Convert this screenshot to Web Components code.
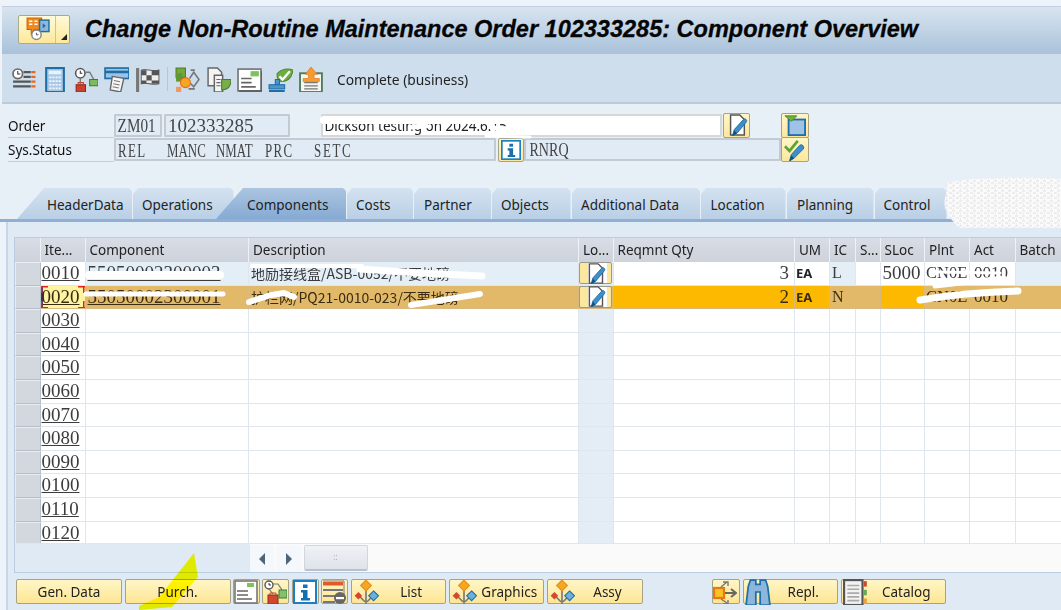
<!DOCTYPE html>
<html>
<head>
<meta charset="utf-8">
<style>
  html, body { margin: 0; height: 100%; overflow: hidden; background: #eef3f9; }
  body { font-family: "Noto Sans", "Liberation Sans", sans-serif; }
</style>
</head>
<body>
<sap-app>
  <sap-titlebar>Change Non-Routine Maintenance Order 102333285: Component Overview</sap-titlebar>
  <sap-toolbar>Complete (business)</sap-toolbar>
  <sap-header></sap-header>
  <sap-tabs></sap-tabs>
  <sap-panel>
    <sap-table></sap-table>
    <sap-actions></sap-actions>
  </sap-panel>
</sap-app>

<script>
const ICONS = {
  menu: '<path d="M2 1h14v11H9l-3 4v-4H2z" fill="#f08a1d" stroke="#c9600f"/><path d="M4 4h3M9 4h3M4 7h3M9 7h3" stroke="#fff" stroke-width="1.5"/><rect x="14" y="3" width="9" height="11" fill="#8fb7dc" stroke="#1c6fa8" stroke-width="1.4"/><path d="M17 6l3 2.5-3 2.5z" fill="#1c6fa8"/><circle cx="11" cy="17" r="4.5" fill="#fff" stroke="#888" stroke-width="1.4"/><path d="M11 15v2h2" stroke="#666" fill="none"/>',
  clocklist: '<circle cx="6.5" cy="6.5" r="4.6" fill="#fff" stroke="#666" stroke-width="1.6"/><path d="M6.5 3.8v2.9h2.4" stroke="#333" fill="none"/><path d="M12 5h7M12 9.5h7M2 14h17M2 18.5h17" stroke="#565656" stroke-width="2.2"/><path d="M19.5 5h4M19.5 9.5h4M19.5 14h4M19.5 18.5h4" stroke="#e8691b" stroke-width="2.2"/>',
  calc: '<rect x="4" y="1" width="17" height="23" fill="#a9c9e6" stroke="#1d6ea6" stroke-width="2"/><rect x="6.5" y="3.5" width="12" height="3.5" fill="#e8f2fa"/><path d="M7 10h11M7 13.5h11M7 17h11M7 20.5h11" stroke="#f1f7fc" stroke-width="1.6" stroke-dasharray="2 1"/>',
  netlock: '<circle cx="7" cy="6" r="4.5" fill="#fff" stroke="#555" stroke-width="1.5"/><path d="M7 3.5V6h2" stroke="#333" fill="none"/><path d="M7 11v5M12 5h4l4 7" stroke="#777" stroke-width="1.3" fill="none"/><rect x="3" y="17" width="9" height="7" fill="#c9402c" stroke="#8e2a1b"/><path d="M5 17v-2h5v2" stroke="#c9402c" fill="none"/><rect x="16" y="12" width="8" height="6" fill="#7dbb5f" stroke="#37803a"/>',
  card: '<rect x="1" y="1" width="23" height="10" fill="#9cc3e5" stroke="#1d6ea6" stroke-width="1.6"/><rect x="1" y="3.5" width="23" height="2.5" fill="#1d6ea6"/><path d="M8 9l11 2-3 13-10-2z" fill="#f6f6f6" stroke="#666" stroke-width="1.3"/><path d="M9.5 13l6 1.2M9 16l6 1.2M8.3 19l6 1.2" stroke="#777"/>',
  flag: '<rect x="1" y="1" width="3" height="23" fill="#777"/><path d="M6 3c5-2 10 2 17 0v13c-7 2-12-2-17 0z" fill="#eee" stroke="#666"/><path d="M6 3h5v5H6zM16 3h7v5h-7zM11 8h5v5h-5zM6 13h5v3H6zM16 13h7v3h-7z" fill="#555"/>',
  network: '<rect x="1" y="1" width="9" height="9" fill="#74a83a" stroke="#4c7d24"/><rect x="1" y="6" width="6" height="8" fill="#5f9830"/><circle cx="10" cy="15" r="4.8" fill="#f6a623" stroke="#e36d18"/><rect x="1" y="19" width="5" height="5" fill="#f19a60"/><path d="M15 3l4 0M14 11l4-6 5 7-5 7-3-3M19 21h-6" stroke="#777" stroke-width="1.5" fill="none"/>',
  docleaf: '<path d="M2 1h9l4 4v13H2z" fill="#f4f4f4" stroke="#666" stroke-width="1.4"/><path d="M8 8h8v16H8z" fill="#f4f4f4" stroke="#666" stroke-width="1.4"/><path d="M10 12h4M10 15h4M10 18h4" stroke="#666"/><path d="M15 12h9c0 6-3 10-9 10z" fill="#77ad4a" stroke="#4c7d24"/>',
  docgreen: '<rect x="1" y="2" width="22" height="21" fill="#fff" stroke="#777" stroke-width="1.6"/><path d="M2 23h22V4" fill="none" stroke="#555" stroke-width="1.4"/><rect x="13" y="4" width="8" height="5" fill="#7cc35a"/><path d="M4 11h10M4 15h10M4 19h14" stroke="#666" stroke-width="1.6"/>',
  stamp: '<path d="M9 6c4-4 10-5 15-3-1 7-5 11-11 11-3 0-5-4-4-8z" fill="#6cae3f" stroke="#4a8a2a"/><path d="M11 9l3 3 7-8" stroke="#fff" stroke-width="2.2" fill="none"/><path d="M7 12h4v5H7z" fill="#4f93c9" stroke="#1d6ea6"/><rect x="1" y="17" width="15" height="4" fill="#4f93c9" stroke="#1d6ea6"/><rect x="1" y="22" width="15" height="2" fill="#1d6ea6"/>',
  clipup: '<rect x="1" y="6" width="21" height="18" fill="#f5f6f2" stroke="#4c7d5a" stroke-width="1.8"/><path d="M5 15h13M5 18h13M5 21h13" stroke="#777" stroke-width="1.2"/><path d="M11.5 0l6 7h-3v4h5v3H4v-3h5V7H6z" fill="#f39c2f" stroke="#e06d15" stroke-width=".6"/>',
  info: '<rect x="1" y="1" width="22" height="22" fill="#fff" stroke="#1c7fc0" stroke-width="2"/><rect x="10" y="4.5" width="4.5" height="3.5" fill="#166fae"/><path d="M8 10h6.5v8H17v2.5H8V18h2v-5.5H8z" fill="#166fae"/>',
  pendoc: '<path d="M5 1h10l5 5v17H5z" fill="#fff" stroke="#555" stroke-width="1.6"/><path d="M7 24l2-7L19 6c2-2 5 1 3 3L12 21z" fill="#3f8ec7" stroke="#1d6ea6"/><path d="M7 24l2-6 3 3z" fill="#0f4f7d"/>',
  filterbox: '<rect x="5" y="6" width="18" height="17" fill="#9fc2e6" stroke="#1c6fa8" stroke-width="2"/><path d="M1 2h13l-6 6z" fill="#69b23b" stroke="#4d8a26"/>',
  checkpen: '<path d="M1 8l5 5 9-11" stroke="#5aa635" stroke-width="3" fill="none"/><path d="M6 24l2-7 9-10c2-2 6 1 4 4l-10 10z" fill="#3f8ec7" stroke="#1d6ea6"/><path d="M6 24l2-6 3 3z" fill="#0f4f7d"/>',
  sum: '<rect x="1" y="1" width="22" height="22" fill="#fff" stroke="#777" stroke-width="1.6"/><rect x="13" y="3" width="7" height="4" fill="#7cc35a"/><path d="M3 11h11M3 15h11M3 19h15" stroke="#666" stroke-width="1.6"/>',
  lockred: '<circle cx="6" cy="5" r="4" fill="#fff" stroke="#555" stroke-width="1.4"/><path d="M6 3v2h2" stroke="#333" fill="none"/><path d="M6 9l4 5M10 4h5l4 6" stroke="#777" stroke-width="1.2" fill="none"/><rect x="5" y="15" width="10" height="9" fill="#d2482e" stroke="#8e2a1b"/><path d="M7 15v-2h6v2" stroke="#c9402c" fill="none"/><rect x="16" y="10" width="8" height="8" fill="#86c06a" stroke="#37803a"/>',
  minuslist: '<rect x="1" y="2" width="20" height="3.5" fill="#e05b28"/><path d="M1 1h21v20" fill="none" stroke="#777"/><rect x="1" y="9" width="20" height="2" fill="#777"/><rect x="1" y="15" width="12" height="2" fill="#777"/><rect x="1" y="21" width="12" height="2" fill="#777"/><circle cx="18" cy="18" r="6" fill="#666"/><rect x="14" y="17" width="8" height="2.2" fill="#fff"/>',
  tree: '<path d="M12 9v14M5 15l6 6M19 15l-6 6" stroke="#777" stroke-width="1.5" fill="none"/><path d="M12 1l5 5-5 5-5-5z" fill="#f5a623" stroke="#e8901a"/><path d="M5 12l3.5 3.5L5 19l-3.5-3.5z" fill="#d2482e"/><path d="M19 11l4.5 4.5L19 20l-4.5-4.5z" fill="#6eb0dc" stroke="#1c6fa8"/>',
  transfer: '<rect x="1" y="8" width="10" height="10" fill="#f7c51e" stroke="#e8761b" stroke-width="2.2"/><path d="M12 13h10M18 9l5 4-5 4" stroke="#666" stroke-width="2" fill="none"/><path d="M8 7l6-5M10 2h5v4M8 19l6 4M10 24h5v-4" stroke="#777" stroke-width="1.4" fill="none"/>',
  binoc: '<path d="M3 7l2-6h5v4h4V1h5l2 6 2 17h-9V12h-4v12H1z" fill="#8db6dc" stroke="#1c6fa8" stroke-width="1.6"/>',
  catalog: '<rect x="1" y="1" width="17" height="23" fill="#f2f2f2" stroke="#555" stroke-width="2"/><path d="M4 6h11M4 9.5h11M4 13h11M4 16.5h11M4 20h11" stroke="#aaa" stroke-width="1.5"/><rect x="19" y="2" width="3" height="5" fill="#d2482e"/><rect x="19" y="10" width="3" height="5" fill="#6aa84f"/><rect x="19" y="18" width="3" height="5" fill="#f0a030"/>'
};

const icon = (name, size = 24) =>
  `<svg width="${size}" height="${size}" viewBox="0 0 24 24" style="display:block;flex:none">${ICONS[name]}</svg>`;

class SapApp extends HTMLElement {
  constructor() {
    super();
    this.attachShadow({mode: 'open'}).innerHTML = `
      <style>
        :host { display: block; position: relative; width: 1061px; height: 610px; overflow: hidden; }
        .page { display: flex; flex-direction: column; height: 100%; filter: blur(.35px); }
        svg { position: absolute; left: 0; top: 0; pointer-events: none; }
        .paint { stroke: #fff; fill: none; stroke-linecap: round; stroke-linejoin: round; }
        .marker { mix-blend-mode: multiply; }
        .over { filter: blur(.5px); }
      </style>
      <div class="page"><slot></slot></div>
      <svg class="marker" width="1061" height="610" viewBox="0 0 1061 610">
        <path d="M194 553l4 24-26 30-33 3v-4l20-9 24-30z" fill="#ffff00"/>
      </svg>
      <svg class="over" width="1061" height="610" viewBox="0 0 1061 610">
        <defs>
          <pattern id="noise" width="7" height="5" patternUnits="userSpaceOnUse">
            <rect width="7" height="5" fill="#fafafa"/>
            <path d="M0 1h3M4 3h3M1 4h1" stroke="#d2d2d2" stroke-width=".7"/>
          </pattern>
        </defs>
        <path d="M948 182c30-5 85-5 113-3v49H960c-10-8-18-20-15-30z" fill="url(#noise)"/>
        <path class="paint" stroke-width="8" d="M324 120H520"/>
        <path class="paint" stroke-width="5" d="M412 127l14-1M492 128l20 1"/>
        <path class="paint" stroke-width="3" d="M486 136l44 1"/>
        <path class="paint" stroke-width="8" d="M89 275h131"/>
        <path class="paint" stroke-width="4" d="M252 266h110"/>
        <path class="paint" stroke-width="7" d="M360 269l60 4 62 3"/>
        <path class="paint" stroke-width="5" d="M86 294h137"/>
        <path class="paint" stroke-width="6" d="M249 302l22-7 13-2 10 4"/>
        <path class="paint" stroke-width="6" d="M411 305l69-11"/>
        <path class="paint" stroke-width="3" d="M938 272l62 1"/>
        <path class="paint" stroke-width="5" d="M935 286l69-8"/>
        <path class="paint" stroke-width="7" d="M920 300c30-5 65-8 98-9"/>
      </svg>`;
  }
}

class SapTitlebar extends HTMLElement {
  constructor() {
    super();
    this.attachShadow({mode: 'open'}).innerHTML = `
      <style>
        :host { display: flex; align-items: center; height: 48px; margin: 6px 0 0 2px; box-sizing: border-box;
          padding: 0 0 3px 16px; background: linear-gradient(#d8e4f0, #a9c2da); border-top: 1px solid #c2cede; }
        .menu { display: flex; width: 52px; height: 29px; box-sizing: border-box; border: 1px solid #aaa98c; border-radius: 2px;
          background: linear-gradient(#fffbd8, #fde89a); }
        .menu i { display: flex; flex: 1; align-items: center; justify-content: center; }
        .menu b { position: relative; width: 13px; border-left: 1px solid #d3c685; }
        .menu b::after { content: ""; position: absolute; right: 2px; bottom: 3px; border: 3px solid transparent;
          border-right-color: #222; border-bottom-color: #222; }
        h1 { margin: 0 0 0 15px; font: italic bold 23.5px "Liberation Sans", sans-serif; -webkit-text-stroke: .3px #050505;
          color: #050505; white-space: nowrap; }
      </style>
      <div class="menu"><i>${icon('menu', 25)}</i><b></b></div>
      <h1><slot></slot></h1>`;
  }
}

class SapToolbar extends HTMLElement {
  constructor() {
    super();
    const names = ['clocklist', 'calc', 'netlock', 'card', 'flag', '|', 'network', 'docleaf', 'docgreen', 'stamp', 'clipup'];
    this.attachShadow({mode: 'open'}).innerHTML = `
      <style>
        :host { display: flex; align-items: center; gap: 6px; height: 50px; margin-left: 2px; box-sizing: border-box; padding: 2px 0 0 9px;
          background: #cfdeed; border-bottom: 2px solid #bccbdb; }
        i { width: 1px; height: 24px; background: #b5c8da; margin: 0 1px; }
        span { margin-left: 7px; font-size: 13.8px; color: #222; }
      </style>
      ${names.map(n => n === '|' ? '<i></i>' : icon(n, 25)).join('')}
      <span><slot></slot></span>`;
  }
}

class SapField extends HTMLElement {
  constructor() {
    super();
    this.attachShadow({mode: 'open'}).innerHTML = `
      <style>
        :host { display: block; box-sizing: border-box; height: 23px; overflow: hidden; background: #e0ebf5; flex: none;
          border: 2px solid #c3cad1; border-radius: 1px; color: #444; font: 19px/19px "Liberation Serif", serif; white-space: nowrap; }
        :host([white]) { background: #fff; border-color: #d7d7d7; font: 13.5px/21px "Noto Sans", sans-serif; color: #222; }
        span { display: inline-block; transform-origin: 0 50%; padding-left: 2px; }
      </style>
      <span><slot></slot></span>`;
  }
  connectedCallback() {
    this.style.width = this.getAttribute('w') + 'px';
    if (this.hasAttribute('sx')) this.shadowRoot.querySelector('span').style.transform = `scaleX(${this.getAttribute('sx')})`;
  }
}

class SapIconBtn extends HTMLElement {
  constructor() {
    super();
    this.attachShadow({mode: 'open'}).innerHTML = `
      <style>
        :host { display: flex; align-items: center; justify-content: center; box-sizing: border-box; flex: none;
          border: 1px solid #a8a284; border-radius: 2px; background: linear-gradient(#fff6c8, #fde79c); }
      </style>`;
  }
  connectedCallback() {
    this.style.width = (this.getAttribute('w') || 29) + 'px';
    this.style.height = (this.getAttribute('h') || 25) + 'px';
    this.shadowRoot.innerHTML += icon(this.getAttribute('name'), +this.getAttribute('s') || 22);
  }
}

class SapHeader extends HTMLElement {
  constructor() {
    super();
    this.attachShadow({mode: 'open'}).innerHTML = `
      <style>
        :host { display: block; height: 84px; padding-top: 9px; box-sizing: border-box; background: #e8f0f7; }
        .row { display: flex; align-items: center; height: 24.5px; }
        .label { width: 106px; margin-left: 8px; font-size: 13.5px; color: #111; line-height: 23px; flex: none;
          box-shadow: 0 1px 0 #c6ced8; padding-top: 1px; box-sizing: border-box; height: 23px; }
        .stat { display: flex; padding-top: 1px; }
        .gap1 { width: 30.5px; flex: none; }
      </style>
      <div class="row">
        <div class="label">Order</div>
        <sap-field w="48" sx=".8">ZM01</sap-field>
        <sap-field w="126" style="margin-left:2px">102333285</sap-field>
        <div class="gap1"></div>
        <sap-field w="401" white>Dickson testing on 2024.6.15</sap-field>
        <sap-icon-btn name="pendoc" w="27" h="25" style="margin-left:1.5px"></sap-icon-btn>
        <div class="gap1"></div>
        <sap-icon-btn name="filterbox" w="28.5" h="25"></sap-icon-btn>
      </div>
      <div class="row">
        <div class="label">Sys.Status</div>
        <sap-field w="381.5"><div class="stat"><sap-st style="letter-spacing:2px">REL</sap-st><sap-st>MANC</sap-st><sap-st>NMAT</sap-st><sap-st style="letter-spacing:2px">PRC</sap-st><sap-st style="letter-spacing:2.5px">SETC</sap-st></div></sap-field>
        <sap-icon-btn name="info" w="26" h="24" s="20" style="margin-left:2.5px"></sap-icon-btn>
        <sap-field w="256.5" sx=".74" style="padding-left:2px">RNRQ</sap-field>
        <sap-icon-btn name="checkpen" w="28.5" h="25"></sap-icon-btn>
      </div>`;
  }
}

class SapSt extends HTMLElement {
  constructor() {
    super();
    this.attachShadow({mode: 'open'}).innerHTML = `
      <style>
        :host { display: block; width: 49px; flex: none; }
        span { display: inline-block; transform: scaleX(.68); transform-origin: 0 50%; }
      </style><span><slot></slot></span>`;
  }
}

class SapTab extends HTMLElement {
  constructor() {
    super();
    this.attachShadow({mode: 'open'}).innerHTML = `
      <style>
        :host { display: flex; align-items: center; box-sizing: border-box; height: 31px; flex: none; padding-top: 3px;
          font-size: 13.5px; color: #222; white-space: nowrap;
          background: linear-gradient(#d4e2f0, #b9cfe6);
          clip-path: polygon(0 100%, 0 6px, 5px 0, calc(100% - 3px) 0, 100% 3px, 100% 100%); }
        :host([big]) { clip-path: polygon(0 100%, 27px 0, calc(100% - 3px) 0, 100% 3px, 100% 100%); }
        :host([active]) { background: linear-gradient(#abc5e1, #86aad3); }
      </style><slot></slot>`;
  }
  connectedCallback() {
    this.style.width = this.getAttribute('w') + 'px';
    this.style.paddingLeft = this.getAttribute('pl') + 'px';
  }
}

class SapTabs extends HTMLElement {
  constructor() {
    super();
    this.attachShadow({mode: 'open'}).innerHTML = `
      <style>
        :host { display: flex; gap: 1px; height: 34px; box-sizing: border-box; padding-left: 17px; border-bottom: 3px solid #8fb0d4; background: #e8f0f7; }
      </style>
      <sap-tab big w="115" pl="30">HeaderData</sap-tab>
      <sap-tab w="100.5" pl="9">Operations</sap-tab>
      <sap-tab big active w="130" pl="31" style="margin-left:-18.5px">Components</sap-tab>
      <sap-tab w="66" pl="9">Costs</sap-tab>
      <sap-tab w="77" pl="10">Partner</sap-tab>
      <sap-tab w="78.5" pl="9">Objects</sap-tab>
      <sap-tab w="128.5" pl="9.5">Additional Data</sap-tab>
      <sap-tab w="84.5" pl="9.5">Location</sap-tab>
      <sap-tab w="87" pl="10.5">Planning</sap-tab>
      <sap-tab w="72" pl="9">Control</sap-tab>`;
  }
}

class SapPanel extends HTMLElement {
  constructor() {
    super();
    this.attachShadow({mode: 'open'}).innerHTML = `
      <style>
        :host { display: flex; flex-direction: column; flex: 1; box-sizing: border-box; margin-left: 6px; padding: 15px 0 0 6px;
          background: #dfeaf4; border-left: 2px solid #c5d6e8; min-height: 0; }
      </style><slot></slot>`;
  }
}

const COLS = '25.5px 45px 163.5px 330px 34.5px 181.5px 35px 26px 24.5px 44.5px 45px 45.5px 60px';

class SapTable extends HTMLElement {
  constructor() {
    super();
    const heads = ['', 'Ite...', 'Component', 'Description', 'Lo...', 'Reqmnt Qty', 'UM', 'IC', 'S...', 'SLoc', 'Plnt', 'Act', 'Batch'];
    const rows = [
      {n: '0010', cls: 'r1', comp: '55050002300003', desc: '地励接线盒/ASB-0052/不要地磅', qty: '3', ic: 'L', sloc: '5000', plnt: 'CN0E', act: '0010'},
      {n: '0020', cls: 'r2', comp: '55050002300001', desc: '护栏网/PQ21-0010-023/不要地磅', qty: '2', ic: 'N', sloc: '', plnt: 'CN0E', act: '0010'}
    ];
    for (let i = 3; i <= 12; i++) rows.push({n: String(i * 10).padStart(4, '0'), cls: ''});
    const rowHtml = r => `
      <div class="row ${r.cls}">
        <div class="sel"></div>
        <div class="c item"><u>${r.n}</u></div>
        <div class="c comp">${r.comp ? `<u>${r.comp}</u>` : ''}</div>
        <div class="c desc">${r.desc || ''}</div>
        <div class="c lo">${r.qty ? `<span class="pen">${icon('pendoc', 21)}</span>` : ''}</div>
        <div class="c qty">${r.qty || ''}</div>
        <div class="c um">${r.qty ? 'EA' : ''}</div>
        <div class="c ic">${r.ic || ''}</div>
        <div class="c s"></div>
        <div class="c sloc">${r.sloc || ''}</div>
        <div class="c plnt">${r.plnt || ''}</div>
        <div class="c act">${r.act || ''}</div>
        <div class="c batch"></div>
      </div>`;
    this.attachShadow({mode: 'open'}).innerHTML = `
      <style>
        :host { display: block; height: 336px; box-sizing: border-box; border: 1px solid #b9cde0; border-width: 1px 0 1px 1px; overflow: hidden; }
        .head, .row { display: grid; grid-template-columns: ${COLS}; }
        .head { height: 24px; }
        .head div { background: linear-gradient(#d9dde5, #cdd2db); border-right: 1px solid #eef1f5; padding-left: 4px;
          font-size: 13.5px; line-height: 24px; color: #222; overflow: hidden; white-space: nowrap; box-sizing: border-box; }
        .rows { height: 281.5px; overflow: hidden; border-bottom: 1px solid #dfe6ee; box-sizing: border-box; }
        .row { height: 23.6px; }
        .c { box-sizing: border-box; background: #fff; border-right: 1px solid #dfe6ee; border-bottom: 1px solid #dfe6ee;
          font: 19px/21px "Liberation Serif", serif; color: #3c3c3c; overflow: hidden; white-space: nowrap; }
        .sel { background: #d3d7de; border: 1px solid #e9ecf0; border-right-color: #b9bfc8; border-bottom-color: #b9bfc8; box-sizing: border-box; }
        .item { padding-left: 1px; }
        .lo { background: #e4edf5; }
        .comp { padding-left: 2px; }
        .desc { padding-left: 2px; font: 14px/22px "Noto Sans CJK SC", "Noto Sans", sans-serif; }
        .qty { text-align: right; padding-right: 5px; }
        .um { font: bold 13px/23px "Noto Sans", sans-serif; padding-left: 1px; color: #222; }
        .ic { font-size: 16px; padding-left: 2px; }
        .sloc { padding-left: 2px; }
        .plnt { padding-left: 1px; font-size: 16.5px; }
        .act { padding-left: 4px; font-size: 17px; }
        .pen { display: flex; align-items: center; justify-content: center; box-sizing: border-box; height: 22px; width: 33px;
          background: linear-gradient(90deg, #fbe79d 0 8px, #fff 8px 27px, #fbe79d 27px); border: 1px solid #9a9a8e; border-radius: 2px; }
        .r1 .comp, .r1 .desc, .r1 .ic, .r1 .batch { background: #e3eef7; }
        .r1 .item { background: #fff; }
        .r2 .c { background: #e2b969; color: #3a2c10; border-color: #d8ba80; }
        .r2 .qty, .r2 .um, .r2 .sloc { background: #fdb900; }
        .r2 .item { background: #fdf3a0; box-shadow: inset 2px 0 0 #2a3a8a; position: relative; }
        .r2 .item::before { content: ""; position: absolute; inset: 0; pointer-events: none;
          background:
            linear-gradient(#e32322, #e32322) 0 0/7px 1.5px no-repeat, linear-gradient(#e32322, #e32322) 0 0/1.5px 7px no-repeat,
            linear-gradient(#e32322, #e32322) 100% 0/7px 1.5px no-repeat, linear-gradient(#e32322, #e32322) 100% 0/1.5px 7px no-repeat,
            linear-gradient(#e32322, #e32322) 0 100%/7px 1.5px no-repeat, linear-gradient(#e32322, #e32322) 0 100%/1.5px 7px no-repeat,
            linear-gradient(#e32322, #e32322) 100% 100%/7px 1.5px no-repeat, linear-gradient(#e32322, #e32322) 100% 100%/1.5px 7px no-repeat; }
        .scroll { display: flex; height: 29px; padding-top: 1px; box-sizing: border-box; }
        .scroll .blank { width: 234.5px; flex: none; }
        .scroll .track { display: flex; flex: 1; background: #fafafa; align-items: stretch; margin-top: -1px; padding-top: 1px; }
        .arrow { display: flex; align-items: center; justify-content: center; width: 24.5px; background: #f4f7fb; margin-right: 2.5px; }
        .thumb { display: flex; align-items: center; justify-content: center; width: 64px; height: 26px; box-sizing: border-box;
          background: linear-gradient(#eff2f6, #dfe4ea); border: 1px solid #cfd6de; border-bottom: 2px solid #b9c2cc; border-radius: 2px;
          color: #aaa; font: 8px/1 "Noto Sans", sans-serif; }
      </style>
      <div class="head">${heads.map(h => `<div>${h}</div>`).join('')}</div>
      <div class="rows">${rows.map(rowHtml).join('')}</div>
      <div class="scroll">
        <div class="blank"></div>
        <div class="track">
          <div class="arrow"><svg width="6" height="12"><path d="M6 0v12L0 6z" fill="#4e6478"/></svg></div>
          <div class="arrow"><svg width="6" height="12"><path d="M0 0v12l6-6z" fill="#4e6478"/></svg></div>
          <div class="thumb">::</div>
        </div>
      </div>`;
  }
}

class SapBtn extends HTMLElement {
  constructor() {
    super();
    this.attachShadow({mode: 'open'}).innerHTML = `
      <style>
        :host { display: flex; align-items: center; box-sizing: border-box; flex: none; height: 25px; padding: 0 1px;
          border: 1px solid #a8a284; border-radius: 2px; background: linear-gradient(#fff6c8, #fde592);
          font-size: 13.5px; color: #222; white-space: nowrap; }
        span { flex: 1; text-align: center; }
      </style>
      <slot name="icon"></slot><span><slot></slot></span>`;
  }
}

class SapActions extends HTMLElement {
  constructor() {
    super();
    const iconBtn = (name, text, w) => `<sap-btn style="width:${w}px"><span slot="icon">${icon(name, 26)}</span>${text}</sap-btn>`;
    const tile = (name, w) => `<sap-btn style="width:${w}px;padding:0">${icon(name, 24)}</sap-btn>`;
    this.attachShadow({mode: 'open'}).innerHTML = `
      <style>
        :host { display: flex; gap: 2.5px; margin-top: 6px; padding-left: 2px; }
        .gap { width: 64.5px; flex: none; }
      </style>
      <sap-btn style="width:106px">Gen. Data</sap-btn>
      <sap-btn style="width:106px">Purch.</sap-btn>
      ${tile('sum', 26.5)}${tile('lockred', 27)}${tile('info', 27)}${tile('minuslist', 27)}
      ${iconBtn('tree', 'List', 95.5)}
      ${iconBtn('tree', 'Graphics', 95.5)}
      ${iconBtn('tree', 'Assy', 96)}
      <div class="gap"></div>
      ${tile('transfer', 28)}
      ${iconBtn('binoc', 'Repl.', 95.5)}
      ${iconBtn('catalog', 'Catalog', 105.5)}`;
  }
}

customElements.define('sap-app', SapApp);
customElements.define('sap-titlebar', SapTitlebar);
customElements.define('sap-toolbar', SapToolbar);
customElements.define('sap-field', SapField);
customElements.define('sap-st', SapSt);
customElements.define('sap-icon-btn', SapIconBtn);
customElements.define('sap-header', SapHeader);
customElements.define('sap-tab', SapTab);
customElements.define('sap-tabs', SapTabs);
customElements.define('sap-panel', SapPanel);
customElements.define('sap-table', SapTable);
customElements.define('sap-btn', SapBtn);
customElements.define('sap-actions', SapActions);
</script>
</body>
</html>
